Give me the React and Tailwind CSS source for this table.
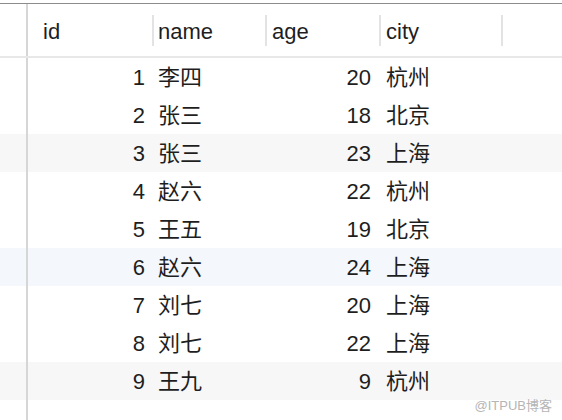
import React from 'react';

const ROWS = [
  { id: 1, name: '李四', age: 20, city: '杭州', bg: 'bg-white' },
  { id: 2, name: '张三', age: 18, city: '北京', bg: 'bg-white' },
  { id: 3, name: '张三', age: 23, city: '上海', bg: 'bg-[#f7f7f7]' },
  { id: 4, name: '赵六', age: 22, city: '杭州', bg: 'bg-white' },
  { id: 5, name: '王五', age: 19, city: '北京', bg: 'bg-white' },
  { id: 6, name: '赵六', age: 24, city: '上海', bg: 'bg-[#f4f7fc]' },
  { id: 7, name: '刘七', age: 20, city: '上海', bg: 'bg-white' },
  { id: 8, name: '刘七', age: 22, city: '上海', bg: 'bg-white' },
  { id: 9, name: '王九', age: 9, city: '杭州', bg: 'bg-[#f7f7f7]' },
];

const FONT = "font-['Liberation_Sans','Noto_Sans_CJK_SC',sans-serif]";

const Sep = () => <div className="w-[2px] h-[31px] bg-[#e3e3e3] shrink-0" />;

const HeaderRow = () => (
  <div className="flex h-[54px] border-b-2 border-[#e8e8e8] bg-white">
    <div className="w-[26px] shrink-0" />
    <div className="w-[2px] shrink-0 bg-[#d6d6d6]" />
    <div className="w-[124px] shrink-0 flex items-center pl-[15px] pt-[2px]">id</div>
    <div className="w-[113px] shrink-0 flex items-center">
      <Sep />
      <span className="pl-[4px] pt-[2px]">name</span>
    </div>
    <div className="w-[114px] shrink-0 flex items-center">
      <Sep />
      <span className="pl-[5px] pt-[2px]">age</span>
    </div>
    <div className="w-[122px] shrink-0 flex items-center">
      <Sep />
      <span className="pl-[5px] pt-[2px]">city</span>
    </div>
    <div className="flex-1 flex items-center">
      <Sep />
    </div>
  </div>
);

const DataRow = ({ row }) => (
  <div className={`flex h-[38px] ${row.bg}`}>
    <div className="w-[26px] shrink-0" />
    <div className="w-[2px] shrink-0 bg-[#d6d6d6]" />
    <div className="w-[124px] shrink-0 flex items-center justify-end pr-[7px]">{row.id}</div>
    <div className="w-[113px] shrink-0 flex items-center pl-[6px]">{row.name}</div>
    <div className="w-[114px] shrink-0 flex items-center justify-end pr-[8px]">{row.age}</div>
    <div className="w-[122px] shrink-0 flex items-center pl-[7px]">{row.city}</div>
    <div className="flex-1" />
  </div>
);

const App = () => {
  return (
    <div className={`relative w-[562px] h-[420px] overflow-hidden bg-white text-[22px] text-[#1e1e1e] ${FONT}`}>
      <div className="h-[3px]" />
      <div className="h-px bg-[#8c8c8c]" />
      <HeaderRow />
      {ROWS.map((row) => (
        <DataRow key={row.id} row={row} />
      ))}
      <div className="flex h-[30px]">
        <div className="w-[26px] shrink-0" />
        <div className="w-[2px] shrink-0 bg-[#d6d6d6]" />
      </div>
      <div className="absolute right-[10px] bottom-[5px] text-[13px] text-[#b5b5b5]">@ITPUB博客</div>
    </div>
  );
};

export default App;
